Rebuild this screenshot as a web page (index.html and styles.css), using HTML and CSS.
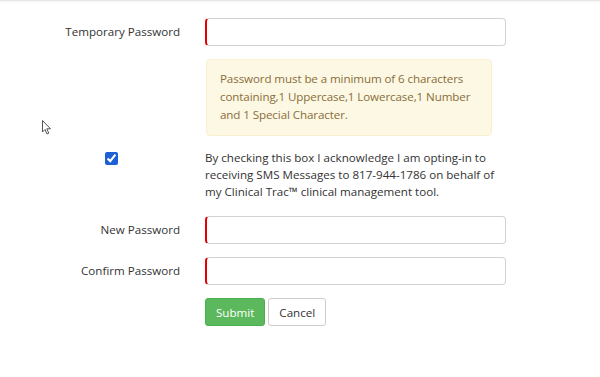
FILE: index.html
```html
<!DOCTYPE html>
<html lang="en">
  <head>
    <meta charset="UTF-8" />
    <title>Change Password</title>
    <link rel="stylesheet" href="styles.css">
  </head>
  <body>
    <div class="top-edge"></div>

    <form class="pw-form">
      <div class="form-row">
        <label for="tempPassword">Temporary Password</label>
        <div class="field">
          <input type="password" id="tempPassword" class="required" />
        </div>
      </div>

      <div class="form-row">
        <div class="spacer"></div>
        <div class="field">
          <div class="alert">
            Password must be a minimum of 6 characters containing,1 Uppercase,1 Lowercase,1 Number and 1 Special Character.
          </div>
        </div>
      </div>

      <div class="form-row consent">
        <div class="check-cell">
          <input type="checkbox" id="smsOptIn" checked />
        </div>
        <div class="field consent-text">
          By checking this box I acknowledge I am opting-in to receiving SMS Messages to 817-944-1786 on behalf of my Clinical Trac™ clinical management tool.
        </div>
      </div>

      <div class="form-row">
        <label for="newPassword">New Password</label>
        <div class="field">
          <input type="password" id="newPassword" class="required" />
        </div>
      </div>

      <div class="form-row">
        <label for="confirmPassword">Confirm Password</label>
        <div class="field">
          <input type="password" id="confirmPassword" class="required" />
        </div>
      </div>

      <div class="form-row">
        <div class="spacer"></div>
        <div class="field actions">
          <button type="submit" class="btn btn-submit">Submit</button>
          <button type="button" class="btn btn-cancel">Cancel</button>
        </div>
      </div>
    </form>

    <!-- mouse pointer left on the screen -->
    <svg class="pointer" width="10" height="15" viewBox="0 0 10 15">
      <path d="M0.5 0.5 L0.5 12 L3 9.5 L5 14 L6.8 13.2 L4.8 8.8 L8.5 8.8 Z" fill="#fff" stroke="#555" stroke-width="1" stroke-linejoin="round" />
    </svg>
  </body>
</html>
```

FILE: styles.css
```css
body {
  margin: 0;
  font-family: "Open Sans", "Liberation Sans", sans-serif;
  font-size: 11.6px;
  color: #333;
  background: #fff;
  position: relative;
}
.top-edge {
  height: 1px;
  background: #e6e6e6;
  box-shadow: 0 1px 2px rgba(0, 0, 0, 0.08);
}
.pw-form {
  padding-top: 17px;
}
.form-row {
  display: grid;
  grid-template-columns: 180px 301px;
  column-gap: 25px;
  align-items: center;
  margin-bottom: 13px;
}
label {
  text-align: right;
  line-height: 28px;
}
input.required {
  display: block;
  box-sizing: border-box;
  width: 100%;
  height: 28px;
  border: 1px solid #d2d2d2;
  border-left: 2px solid #e60000;
  border-radius: 4px;
  padding: 4px 8px;
  font: inherit;
  outline: none;
}
.alert {
  width: 286px;
  box-sizing: border-box;
  margin-left: 1px;
  padding: 10px 6px 11px 13px;
  background: #fcf8e3;
  border: 1px solid #faefd2;
  border-radius: 4px;
  color: #8a6d3b;
  line-height: 18px;
  letter-spacing: -0.1px;
}
.consent {
  align-items: start;
  margin-top: 13px;
  margin-bottom: 16px;
}
.check-cell {
  padding-top: 3px;
  padding-left: 105px;
}
.check-cell input {
  margin: 0;
  width: 13px;
  height: 13px;
  accent-color: #1f5fd6;
}
.consent-text {
  line-height: 17px;
  padding-right: 2px;
}
.actions {
  display: flex;
  gap: 3px;
}
.btn {
  height: 28px;
  padding: 0 10px;
  border-radius: 3px;
  font: inherit;
  cursor: pointer;
}
.btn-submit {
  background: #5cb85c;
  border: 1px solid #4cae4c;
  color: #fff;
}
.btn-cancel {
  background: #fff;
  border: 1px solid #ccc;
  color: #333;
}
.pointer {
  position: absolute;
  left: 42px;
  top: 120px;
}
```
